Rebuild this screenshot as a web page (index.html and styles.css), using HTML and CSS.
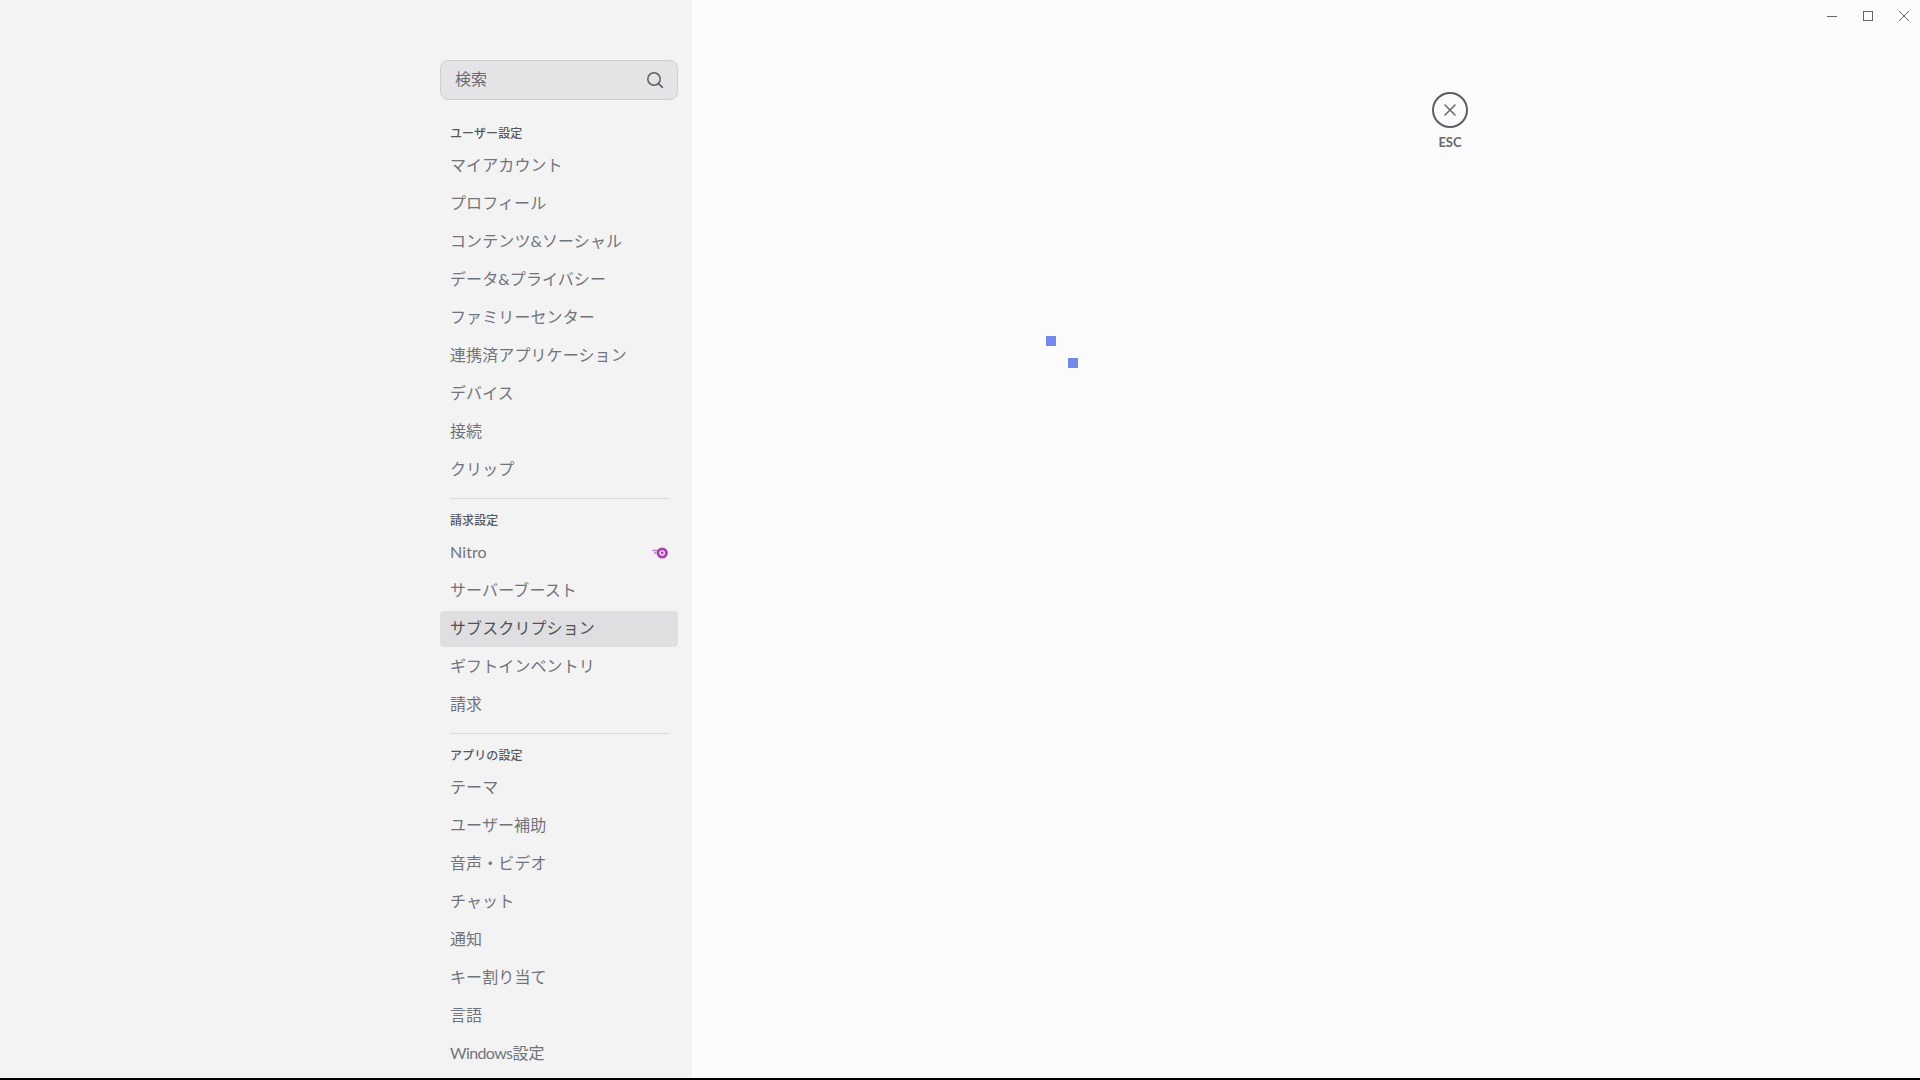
FILE: index.html
```html
<!DOCTYPE html>
<html lang="ja">
<head>
<meta charset="utf-8">
<title>設定</title>
<link rel="stylesheet" href="styles.css">
</head>
<body>
<div class="app">
  <aside class="sidebar">
    <nav class="nav">
      <div class="search">
        <span class="search-text">検索</span>
        <svg class="search-icon" width="18" height="18" viewBox="0 0 18 18" fill="none" stroke="#5c5e66" stroke-width="1.5" stroke-linecap="round"><circle cx="8" cy="8" r="6.2"/><path d="M12.6 12.6 16.4 16.4"/></svg>
      </div>
      <section class="group first">
        <h2 class="group-title">ユーザー設定</h2>
        <a class="item">マイアカウント</a>
        <a class="item">プロフィール</a>
        <a class="item">コンテンツ&amp;ソーシャル</a>
        <a class="item">データ&amp;プライバシー</a>
        <a class="item">ファミリーセンター</a>
        <a class="item">連携済アプリケーション</a>
        <a class="item">デバイス</a>
        <a class="item">接続</a>
        <a class="item">クリップ</a>
      </section>
      <hr class="divider">
      <section class="group billing">
        <h2 class="group-title">請求設定</h2>
        <a class="item item-nitro">Nitro
          <svg class="nitro-icon" width="16" height="14" viewBox="0 0 16 14"><circle cx="10.2" cy="7" r="5.6" fill="#a93fb0"/><circle cx="10.2" cy="7" r="2.1" fill="none" stroke="#f7e6f8" stroke-width="1.4"/><path d="M0.5 4.5h4.5M2 7h2.5" stroke="#b877c8" stroke-width="1.3"/></svg>
        </a>
        <a class="item">サーバーブースト</a>
        <a class="item selected">サブスクリプション</a>
        <a class="item">ギフトインベントリ</a>
        <a class="item">請求</a>
      </section>
      <hr class="divider">
      <section class="group">
        <h2 class="group-title">アプリの設定</h2>
        <a class="item">テーマ</a>
        <a class="item">ユーザー補助</a>
        <a class="item">音声・ビデオ</a>
        <a class="item">チャット</a>
        <a class="item">通知</a>
        <a class="item">キー割り当て</a>
        <a class="item">言語</a>
        <a class="item"><span><span class="latin-tight">Windows</span>設定</span></a>
      </section>
    </nav>
  </aside>
  <main class="main">
    <div class="spinner">
      <span class="cube"></span>
      <span class="cube cube-b"></span>
    </div>
    <div class="esc">
      <span class="esc-circle">
        <svg width="14" height="14" viewBox="0 0 14 14" fill="none" stroke="#66686e" stroke-width="1.5" stroke-linecap="round"><path d="M2 2 12 12M12 2 2 12"/></svg>
      </span>
      <span class="esc-label">ESC</span>
    </div>
    <div class="window-controls">
      <svg width="10" height="10" viewBox="0 0 10 10" stroke="#66686e" fill="none"><path d="M0 5.5H10"/></svg>
      <svg width="10" height="10" viewBox="0 0 10 10" stroke="#66686e" fill="none"><rect x=".5" y=".5" width="9" height="9"/></svg>
      <svg width="10" height="10" viewBox="0 0 10 10" stroke="#66686e" fill="none"><path d="M0 0 10 10M10 0 0 10"/></svg>
    </div>
  </main>
</div>
<div class="bottom-bar"></div>
</body>
</html>
```
FILE: styles.css
```css
* { box-sizing: border-box; }
html, body { margin: 0; height: 100%; overflow: hidden; }
body {
  display: flex;
  flex-direction: column;
  background: #000;
  font-family: "Lato", "Noto Sans CJK JP", sans-serif;
  color: #5c5e66;
}
.app { display: flex; height: 1078px; }
.bottom-bar { height: 2px; background: #000; }

.sidebar {
  width: 692px;
  flex: none;
  background: #f3f3f4;
  padding: 60px 14px 0 440px;
}
.nav { width: 238px; }

.search {
  height: 40px;
  display: flex;
  align-items: center;
  justify-content: space-between;
  padding: 0 13px 2px 14px;
  background: #e4e4e6;
  border: 1px solid #cfcfd2;
  border-radius: 8px;
  font-size: 16px;
}
.search-text { color: #6a6c73; line-height: 1; }
.search-icon { margin-top: 2px; }

.group { margin: 0; }
.group.first { margin-top: 24px; }
.group-title {
  margin: 0;
  padding: 0 10px;
  height: 20px;
  font-size: 12px;
  line-height: 20px;
  font-weight: 500;
  letter-spacing: 0.1px;
  color: #55575f;
}
.item {
  display: flex;
  align-items: center;
  justify-content: space-between;
  height: 36px;
  margin-top: 2px;
  padding: 0 10px 2px;
  border-radius: 4px;
  font-size: 16px;
  font-weight: 400;
  letter-spacing: 0.1px;
  color: #72747b;
  white-space: nowrap;
}
.group-title + .item { margin-top: 3px; }
.latin-tight { letter-spacing: -0.6px; }

.billing { margin-bottom: -1px; }
.billing .group-title + .item { margin-top: 4px; }
.billing .item { padding-bottom: 4px; }

.item.selected { background: #dfdfe1; color: #4e5058; }
.nitro-icon { flex: none; margin-top: 3px; }

.divider {
  margin: 11px 9px 12px 10px;
  height: 1px;
  border: 0;
  background: #dcdcde;
}

.main {
  flex: 1;
  position: relative;
  display: flex;
  align-items: flex-start;
  background: #fbfbfb;
  padding-left: 354px;
}
.spinner {
  width: 32px;
  height: 32px;
  margin-top: 336px;
  display: flex;
  flex-direction: column;
  justify-content: space-between;
}
.cube { width: 10px; height: 10px; background: #7289ea; }
.cube-b { align-self: flex-end; }

.esc {
  width: 36px;
  margin: 92px 0 0 354px;
  display: flex;
  flex-direction: column;
  align-items: center;
}
.esc-circle {
  width: 36px;
  height: 36px;
  border: 2px solid #5c5e66;
  border-radius: 50%;
  display: flex;
  align-items: center;
  justify-content: center;
}
.esc-label {
  margin-top: 5px;
  font-size: 13px;
  line-height: 18px;
  font-weight: 700;
  color: #66686e;
}

.window-controls {
  position: absolute;
  top: 11px;
  right: 11px;
  display: flex;
  gap: 26px;
}
```
